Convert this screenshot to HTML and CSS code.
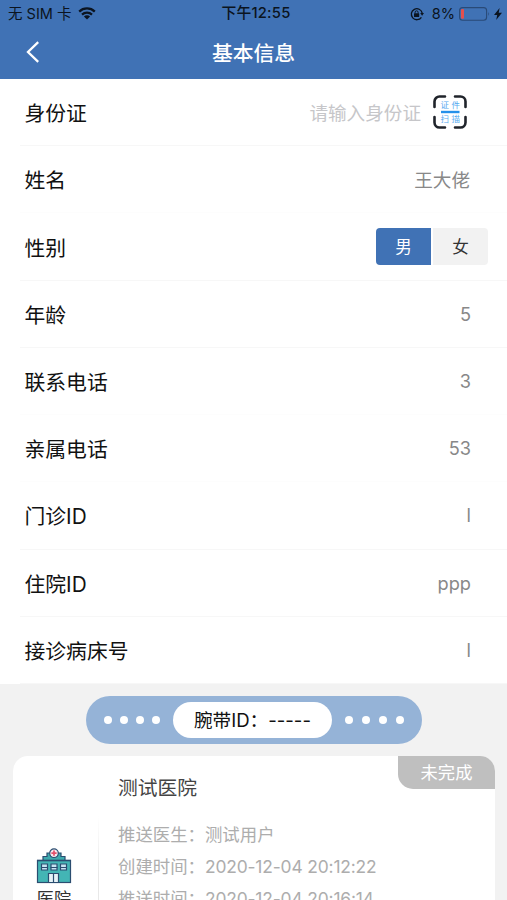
FILE: index.html
```html
<!DOCTYPE html>
<html lang="zh-CN">

<head>
    <meta charset="UTF-8">
    <meta name="viewport" content="width=device-width, initial-scale=1.0">
    <title>基本信息</title>
    <link rel="stylesheet" href="styles.css">
</head>

<body>
    <div class="header">
        <div class="status">
            <div class="status-left">
                <span>无 SIM 卡</span>
                <svg class="wifi" width="18" height="13" viewBox="0 0 18 13">
                    <path d="M1.2 4.6a11.2 11.2 0 0 1 15.6 0" fill="none" stroke="#0b1420" stroke-width="2.3" />
                    <path d="M4 7.6a7.2 7.2 0 0 1 10 0" fill="none" stroke="#0b1420" stroke-width="2.2" />
                    <path d="M9 12.6L5.9 9.5a4.4 4.4 0 0 1 6.2 0z" fill="#0b1420" />
                </svg>
            </div>
            <div class="status-time">下午12:55</div>
            <div class="status-right">
                <svg class="lock" width="14" height="14" viewBox="0 0 14 14">
                    <path d="M11.4 10.3A5.5 5.5 0 1 1 12.2 6" fill="none" stroke="#0b1420" stroke-width="1.3" />
                    <path d="M10.2 6h3.8l-1.9 2.7z" fill="#0b1420" />
                    <rect x="4" y="6.2" width="5.2" height="3.8" rx=".5" fill="#0b1420" />
                    <path d="M5.1 6.5V5.3a1.5 1.5 0 0 1 3 0v1.2" fill="none" stroke="#0b1420" stroke-width="1" />
                </svg>
                <span class="percent">8%</span>
                <svg class="battery" width="31" height="14" viewBox="0 0 31 14">
                    <rect x=".6" y=".6" width="27" height="12.6" rx="3" fill="none" stroke="#294a77" stroke-width="1.1" />
                    <rect x="2" y="2" width="3" height="9.8" rx="1" fill="#e4504f" />
                    <path d="M29.3 4.8q1.5 2.1 0 4.2z" fill="#294a77" />
                </svg>
                <svg class="bolt" width="8" height="12" viewBox="0 0 8 12">
                    <path d="M5.6 0L0 6.900h3.200L2.200 12l5.800-7.200H4.700z" fill="#0b1420" />
                </svg>
            </div>
        </div>
        <div class="nav">
            <svg class="back" width="14" height="22" viewBox="0 0 14 22">
                <path d="M12.2 1.2L2 11l10.2 9.8" fill="none" stroke="#fff" stroke-width="2.3" />
            </svg>
            <h1 class="title">基本信息</h1>
        </div>
    </div>

    <div class="form">
        <div class="row">
            <span class="label">身份证</span>
            <span class="value placeholder">请输入身份证</span>
            <svg class="scan" width="34" height="34" viewBox="0 0 34 34">
                <path d="M1.5 12V6.5a5 5 0 0 1 5-5H12M22 1.5h5.500a5 5 0 0 1 5 5V12M32.500 22v5.500a5 5 0 0 1-5 5H22M12 32.500H6.500a5 5 0 0 1-5-5V22" fill="none" stroke="#20242b" stroke-width="2.6" stroke-linecap="round" />
                <path d="M8 17h18.500" stroke="#2490ea" stroke-width="2.4" />
                <text class="scan-text" x="7.500" y="13.200">证</text>
                <text class="scan-text" x="18.600" y="13.200">件</text>
                <text class="scan-text" x="7.500" y="27">扫</text>
                <text class="scan-text" x="18.600" y="27">描</text>
            </svg>
        </div>
        <div class="row light">
            <span class="label">姓名</span>
            <span class="value">王大佬</span>
        </div>
        <div class="row">
            <span class="label">性别</span>
            <div class="gender">
                <span class="gender-item active">男</span>
                <span class="gender-item">女</span>
            </div>
        </div>
        <div class="row">
            <span class="label">年龄</span>
            <span class="value number">5</span>
        </div>
        <div class="row light">
            <span class="label">联系电话</span>
            <span class="value number">3</span>
        </div>
        <div class="row light">
            <span class="label">亲属电话</span>
            <span class="value number">53</span>
        </div>
        <div class="row">
            <span class="label">门诊ID</span>
            <span class="value number">l</span>
        </div>
        <div class="row">
            <span class="label">住院ID</span>
            <span class="value number">ppp</span>
        </div>
        <div class="row">
            <span class="label">接诊病床号</span>
            <span class="value number">l</span>
        </div>
    </div>

    <!-- 腕带 -->
    <div class="band">
        <div class="dots"><i></i><i></i><i></i><i></i></div>
        <div class="band-id">腕带ID：-----</div>
        <div class="dots dots-right"><i></i><i></i><i></i><i></i></div>
    </div>

    <div class="card">
        <div class="card-side">
            <svg width="36" height="36" viewBox="0 0 36 36" stroke="#2b4d70" stroke-width="1.200">
                <path d="M7 13V8.500h4V5h14v3.500h4V13z" fill="#3eaaae" />
                <rect x="1.500" y="12.500" width="33" height="22" fill="#43b5b5" />
                <path d="M1 12.500h34" stroke-width="1.500" />
                <circle cx="18" cy="5.200" r="4.300" fill="#f6e9ef" />
                <path d="M18 2.600v5.200M15.400 5.200h5.200" stroke="#e5506b" stroke-width="1.700" />
                <path d="M5.500 16h6v6h-6zM15 16h6v6h-6zM24.500 16h6v6h-6z" fill="#c6e4f2" />
                <path d="M5 19.500h7M14.500 19.500h7M24 19.500h7" />
                <path d="M12.500 25.500h10v9h-10z" fill="#e6f3f8" />
                <path d="M17.500 25.500v9" />
            </svg>
            <span class="card-type">医院</span>
        </div>
        <div class="card-line"></div>
        <div class="card-main">
            <h2 class="card-title">测试医院</h2>
            <p>推送医生：<span>测试用户</span></p>
            <p>创建时间：<span class="date">2020-12-04 20:12:22</span></p>
            <p>推送时间：<span class="date">2020-12-04 20:16:14</span></p>
        </div>
        <div class="tag">未完成</div>
    </div>
</body>

</html>
```

FILE: styles.css
```css
* {
    padding: 0;
    margin: 0;
    box-sizing: border-box;
}

body {
    height: 900px;
    overflow: hidden;
    background-color: #f2f2f2;
    font-family: Inter, "Noto Sans CJK SC", sans-serif;
    color: #111;
}

svg {
    display: block;
    flex: none;
}

/* 顶部 */
.header {
    height: 79px;
    background-color: #4072b5;
}

.status {
    display: grid;
    grid-template-columns: 1fr auto 1fr;
    align-items: center;
    height: 27px;
    padding: 0 5px 0 8px;
    font-size: 14.5px;
    line-height: 27px;
    color: #0b1420;
}

.status-left,
.status-right {
    display: flex;
    align-items: center;
}

.status-right {
    justify-content: flex-end;
}

.wifi {
    margin-left: 7px;
}

.status-time {
    font-size: 14.8px;
    font-weight: 500;
    letter-spacing: 0.2px;
    margin-left: 2px;
}

.percent {
    margin: 0 4px 0 8px;
}

.bolt {
    margin-left: 4px;
}

.nav {
    display: grid;
    grid-template-columns: 40px 1fr 40px;
    align-items: center;
    height: 50px;
}

.back {
    margin-left: 26px;
}

.title {
    text-align: center;
    font-size: 20.8px;
    font-weight: 500;
    color: #fff;
}

/* 表单 */
.form {
    height: 605px;
    display: grid;
    grid-template-rows: repeat(9, 1fr);
    padding-left: 20px;
    background-color: #fff;
}

.row {
    display: flex;
    align-items: center;
    padding: 0 37px 0 4.5px;
    border-bottom: 1px solid #f7f7f7;
}

.row.light {
    border-bottom-color: #fdfdfd;
}

.label {
    font-size: 20.8px;
}

.value {
    position: relative;
    top: -1px;
    margin-left: auto;
    font-size: 18.6px;
    color: #888;
}

.value.number {
    top: 0;
    margin-right: -1px;
    font-size: 18.2px;
}

.value.placeholder {
    color: #c6c6c9;
}

.scan {
    margin: 0 3px 0 12px;
}

.scan-text {
    font-size: 8.5px;
    fill: #55a9f0;
}

.gender {
    display: flex;
    gap: 2px;
    margin: 0 -18px 0 auto;
}

.gender-item {
    width: 55px;
    height: 37px;
    line-height: 38px;
    text-align: center;
    font-size: 16.6px;
    color: #333;
    background-color: #f2f2f2;
    border-radius: 0 4px 4px 0;
}

.gender-item.active {
    color: #fff;
    background-color: #4072b5;
    border-radius: 4px 0 0 4px;
}

/* 腕带 */
.band {
    display: flex;
    align-items: center;
    justify-content: space-between;
    width: 336px;
    height: 48px;
    margin: 12px 0 12px 86px;
    padding: 0 18px;
    border-radius: 24px;
    background-color: #95b3d7;
}

.dots {
    display: flex;
    gap: 8px;
}

.dots-right {
    gap: 9px;
}

.dots i {
    width: 8px;
    height: 8px;
    border-radius: 50%;
    background-color: #fff;
}

.band-id {
    width: 159px;
    height: 36px;
    line-height: 37px;
    text-align: center;
    font-size: 18.6px;
    border-radius: 18px;
    background-color: #fff;
}

/* 卡片 */
.card {
    position: relative;
    display: flex;
    height: 144px;
    margin: 0 12px 0 13px;
    border-radius: 15px 15px 0 0;
    background-color: #fff;
}

.card-side {
    display: flex;
    flex-direction: column;
    align-items: center;
    width: 82px;
    padding-top: 92px;
}

.card-type {
    margin-top: 3px;
    font-size: 17.2px;
    line-height: 24px;
    color: #333;
}

.card-line {
    width: 1px;
    margin: 60px 0 0 3px;
    background: linear-gradient(#fff, #e8e8e8 60px);
}

.card-main {
    padding: 16px 0 0 19px;
    font-size: 17.4px;
    line-height: 32px;
    color: #adadad;
}

.card-title {
    margin-bottom: 15px;
    font-size: 19.8px;
    font-weight: 400;
    line-height: 32px;
    color: #444;
}

.date {
    letter-spacing: -0.15px;
}

.tag {
    position: absolute;
    top: 0;
    right: 0;
    width: 97px;
    height: 33px;
    line-height: 33px;
    text-align: center;
    font-size: 17.3px;
    color: #fff;
    background-color: #bfbfbf;
    border-radius: 0 15px 0 15px;
}
```
